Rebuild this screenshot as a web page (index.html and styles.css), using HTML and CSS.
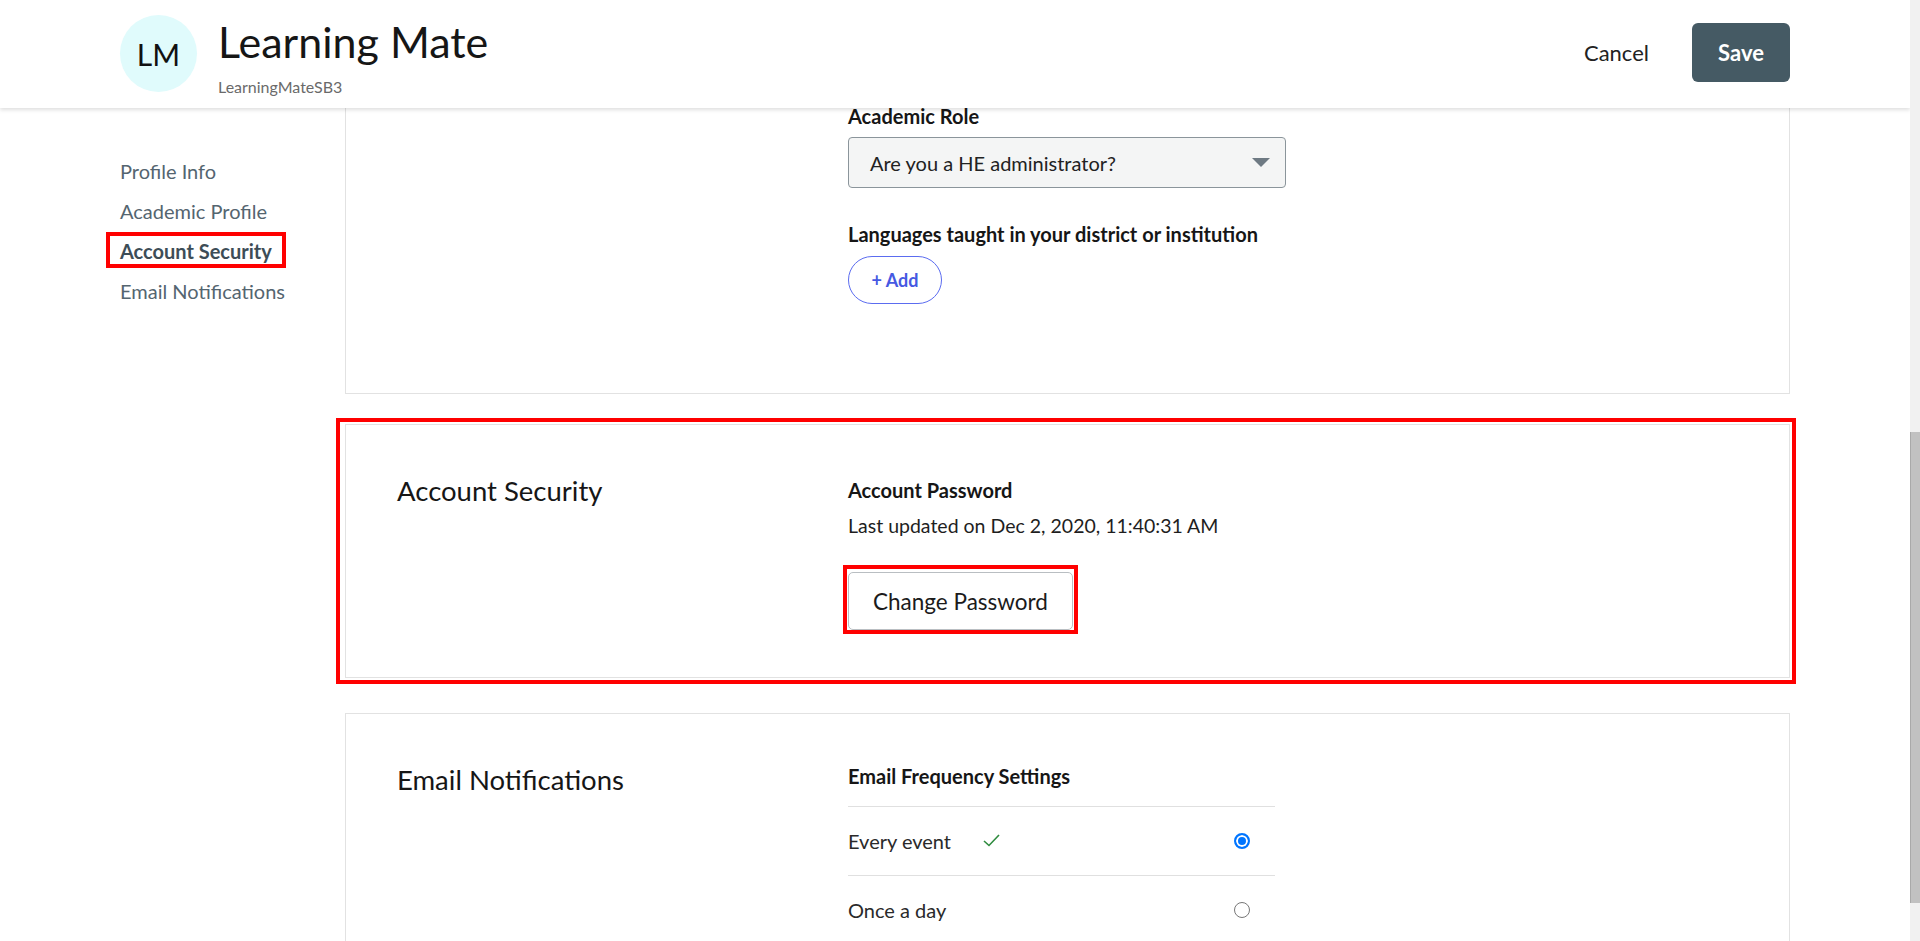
FILE: index.html
```html
<!DOCTYPE html>
<html>
<head>
    <meta charset="utf-8">
    <title>Profile settings</title>
    <link rel="stylesheet" href="styles.css">
</head>
<body>

<div class="page">

    <header class="topbar">
        <div class="topbar-inner">
            <div class="brand">
                <div class="avatar">LM</div>
                <div class="brand-text">
                    <h1>Learning Mate</h1>
                    <div class="brand-sub">LearningMateSB3</div>
                </div>
            </div>
            <div class="actions">
                <button class="btn-cancel">Cancel</button>
                <button class="btn-save">Save</button>
            </div>
        </div>
    </header>

    <div class="layout">

        <nav class="sidenav">
            <a href="#profile">Profile Info</a>
            <a href="#academic">Academic Profile</a>
            <a href="#security" class="active"><span class="marked">Account Security</span></a>
            <a href="#email">Email Notifications</a>
        </nav>

        <main class="sections">

            <section class="card card-academic" id="academic">
                <div class="card-title"></div>
                <div class="card-body">
                    <div class="field-label">Academic Role</div>
                    <div class="select">
                        <span>Are you a HE administrator?</span>
                        <span class="caret"></span>
                    </div>
                    <div class="field-label second">Languages taught in your district or institution</div>
                    <button class="btn-add">+ Add</button>
                </div>
            </section>

            <section class="card card-security" id="security">
                <h2 class="card-title">Account Security</h2>
                <div class="card-body">
                    <div class="field-label">Account Password</div>
                    <p class="muted">Last updated on Dec 2, 2020, 11:40:31 AM</p>
                    <button class="btn-outline">Change Password</button>
                </div>
            </section>

            <section class="card card-email" id="email">
                <h2 class="card-title">Email Notifications</h2>
                <div class="card-body">
                    <div class="field-label list-head">Email Frequency Settings</div>
                    <div class="freq-list">
                        <div class="freq-row">
                            <span class="freq-name">Every event</span>
                            <svg class="tick" width="17" height="13" viewBox="0 0 17 13">
                                <path d="M1 7 L6 11.5 L16 1" fill="none" stroke="#2e8b3e" stroke-width="1.6"/>
                            </svg>
                            <span class="radio checked"></span>
                        </div>
                        <div class="freq-row">
                            <span class="freq-name">Once a day</span>
                            <span class="radio"></span>
                        </div>
                    </div>
                </div>
            </section>

        </main>
    </div>
</div>

<div class="scrollbar"><div class="thumb"></div></div>

</body>
</html>
```

FILE: styles.css
```css
html, body {
    margin: 0;
    height: 100%;
}

body {
    display: flex;
    overflow: hidden;
    font-family: Lato, "Open Sans", sans-serif;
    font-size: 20px;
    color: #1b1b1b;
    background: #fff;
}

.page {
    flex: 1;
    overflow: hidden;
}

button {
    font-family: inherit;
    cursor: pointer;
}

/* top bar */

.topbar {
    position: relative;
    z-index: 2;
    height: 108px;
    background: #fff;
    box-shadow: 0 2px 4px rgba(0, 0, 0, 0.13);
}

.topbar-inner {
    max-width: 1670px;
    margin: 0 auto;
    display: flex;
    justify-content: space-between;
    align-items: flex-start;
}

.brand {
    display: flex;
    padding-top: 15px;
}

.avatar {
    width: 77px;
    height: 77px;
    border-radius: 50%;
    background: #e0fbfc;
    display: flex;
    align-items: center;
    justify-content: center;
    font-size: 30px;
    color: #111;
}

.brand-text {
    margin-left: 21px;
}

.brand-text h1 {
    margin: 2px 0 0;
    font-size: 43px;
    line-height: 50px;
    font-weight: 400;
    color: #161616;
}

.brand-sub {
    margin-top: 10px;
    font-size: 16px;
    line-height: 19px;
    color: #6a6a6a;
}

.actions {
    display: flex;
    align-items: center;
    gap: 43px;
    padding-top: 23px;
}

.btn-cancel {
    border: 0;
    background: none;
    padding: 0;
    font-size: 22px;
    color: #222;
}

.btn-save {
    height: 59px;
    width: 98px;
    border: 0;
    border-radius: 6px;
    background: #455a64;
    color: #fff;
    font-size: 22px;
    font-weight: 700;
}

/* main layout */

.layout {
    max-width: 1670px;
    margin: 0 auto;
    display: flex;
}

.sidenav {
    width: 225px;
    flex-shrink: 0;
    padding-top: 43px;
}

.sidenav a {
    display: block;
    height: 40px;
    line-height: 40px;
    color: #546570;
    text-decoration: none;
}

.sidenav a.active {
    font-weight: 700;
    color: #3d4d57;
}

.marked {
    position: relative;
    display: inline-block;
    line-height: 24px;
}

.marked::after {
    content: "";
    position: absolute;
    left: -14px;
    right: -14px;
    top: -7px;
    bottom: -5px;
    border: 4px solid #f00;
}

.sections {
    flex: 1;
    margin-top: -30px;
}

.card {
    display: flex;
    border: 1px solid #e2e2e2;
    padding: 49px 51px 47px;
}

.card-title {
    width: 451px;
    flex-shrink: 0;
    margin: 0;
    font-size: 27.5px;
    line-height: 34px;
    font-weight: 400;
    color: #161616;
}

.card-body {
    flex: 1;
    padding-top: 4px;
}

.card-academic {
    padding-top: 25px;
    padding-bottom: 89px;
}

.card-academic .card-body {
    padding-top: 0;
}

.card-security {
    position: relative;
    margin-top: 30px;
}

.card-security::after {
    content: "";
    position: absolute;
    left: -10px;
    right: -7px;
    top: -7px;
    bottom: -7px;
    border: 4px solid #f00;
}

.card-email {
    margin-top: 35px;
    padding-bottom: 80px;
}

.card-email .card-body {
    padding-top: 1px;
}

.field-label {
    font-weight: 700;
    line-height: 24px;
    color: #161616;
}

.field-label.second {
    margin-top: 34px;
}

.select {
    margin-top: 9px;
    width: 438px;
    height: 51px;
    box-sizing: border-box;
    border: 1px solid #8b959b;
    border-radius: 4px;
    background: #f4f5f5;
    display: flex;
    align-items: center;
    justify-content: space-between;
    padding: 0 15px 0 21px;
    color: #222;
}

.caret {
    width: 0;
    height: 0;
    border-left: 9px solid transparent;
    border-right: 9px solid transparent;
    border-top: 9px solid #6e7a83;
}

.btn-add {
    margin-top: 10px;
    width: 94px;
    height: 48px;
    border: 1px solid #5b6cf0;
    border-radius: 24px;
    background: #fff;
    color: #4659e2;
    font-size: 18px;
    font-weight: 700;
}

.muted {
    margin: 12px 0 0;
    font-size: 19.5px;
    line-height: 24px;
    color: #1e1e1e;
}

.btn-outline {
    position: relative;
    margin-top: 34px;
    width: 225px;
    height: 58px;
    border: 1px solid #b9bec2;
    border-radius: 5px;
    background: #fff;
    font-size: 22.5px;
    color: #1b1b1b;
}

.btn-outline::after {
    content: "";
    position: absolute;
    left: -6px;
    right: -6px;
    top: -8px;
    bottom: -5px;
    border: 4px solid #f00;
}

.list-head {
    padding-bottom: 18px;
}

.freq-list {
    width: 427px;
}

.freq-row {
    display: flex;
    align-items: center;
    height: 68px;
    border-top: 1px solid #e0e0e0;
    color: #2a2a2a;
}

.freq-name {
    width: 135px;
}

.tick {
    margin-top: -2px;
}

.radio {
    margin-left: auto;
    margin-right: 25px;
    width: 16px;
    height: 16px;
    box-sizing: border-box;
    border-radius: 50%;
    border: 1px solid #777;
    background: #fff;
}

.radio.checked {
    border: 2px solid #0075ff;
    box-shadow: inset 0 0 0 2px #fff;
    background: #0075ff;
}

/* fake window scrollbar */

.scrollbar {
    width: 10px;
    flex-shrink: 0;
    background: #f1f1f1;
    padding-top: 432px;
}

.thumb {
    height: 471px;
    background: #c1c1c1;
    border-left: 1px solid #a9a9a9;
}
```
